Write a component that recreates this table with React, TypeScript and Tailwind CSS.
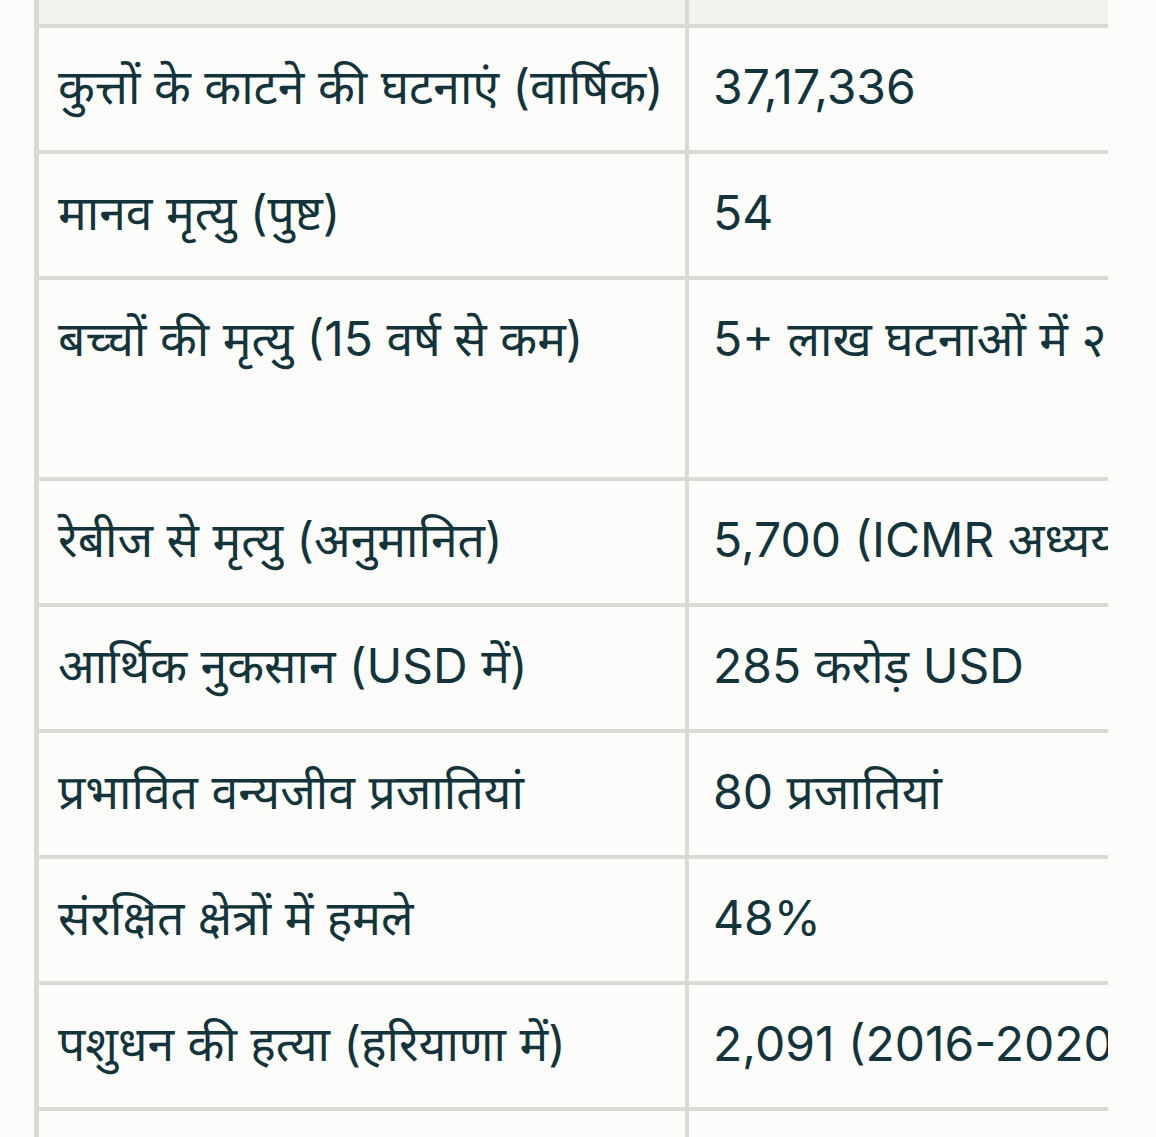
const rows = [
  { label: "कुत्तों के काटने की घटनाएं (वार्षिक)", value: "37,17,336", tall: false },
  { label: "मानव मृत्यु (पुष्ट)", value: "54", tall: false },
  { label: "बच्चों की मृत्यु (15 वर्ष से कम)", value: "5+ लाख घटनाओं में २ मौतें", tall: true },
  { label: "रेबीज से मृत्यु (अनुमानित)", value: "5,700 (ICMR अध्ययन)", tall: false },
  { label: "आर्थिक नुकसान (USD में)", value: "285 करोड़ USD", tall: false },
  { label: "प्रभावित वन्यजीव प्रजातियां", value: "80 प्रजातियां", tall: false },
  { label: "संरक्षित क्षेत्रों में हमले", value: "48%", tall: false },
  { label: "पशुधन की हत्या (हरियाणा में)", value: "2,091 (2016-2020)", tall: false },
];

export default function App() {
  return (
    <div
      className="w-[1156px] h-[1137px] overflow-hidden bg-[#fbfbf9] text-[#13343b]"
      style={{ fontFamily: 'Inter, "Noto Sans Devanagari", "Noto Sans", sans-serif' }}
    >
      <div className="ml-[34px] w-[1074px] overflow-hidden border-l-[5px] border-[#dad9d4]">
        {/* header row, scrolled off */}
        <div className="grid grid-cols-[650px_1fr] h-[24px] bg-[#f2f2ef]">
          <div className="border-r-[4px] border-[#dad9d4]" />
          <div />
        </div>

        {rows.map((row) => (
          <div
            key={row.label}
            className={`grid grid-cols-[650px_1fr] border-t-[4px] border-[#dad9d4] bg-[#fcfcfa] ${
              row.tall ? "h-[201px]" : "h-[126px]"
            }`}
          >
            <div className="border-r-[4px] border-[#dad9d4] pl-[19px] pt-[26px] text-[48px] leading-[66px] whitespace-nowrap">
              {row.label}
            </div>
            <div className="pl-[24px] pt-[26px] text-[48px] leading-[66px] whitespace-nowrap overflow-hidden">
              {row.value}
            </div>
          </div>
        ))}

        <div className="grid grid-cols-[650px_1fr] h-[60px] border-t-[4px] border-[#dad9d4] bg-[#fcfcfa]">
          <div className="border-r-[4px] border-[#dad9d4]" />
          <div />
        </div>
      </div>
    </div>
  );
}
